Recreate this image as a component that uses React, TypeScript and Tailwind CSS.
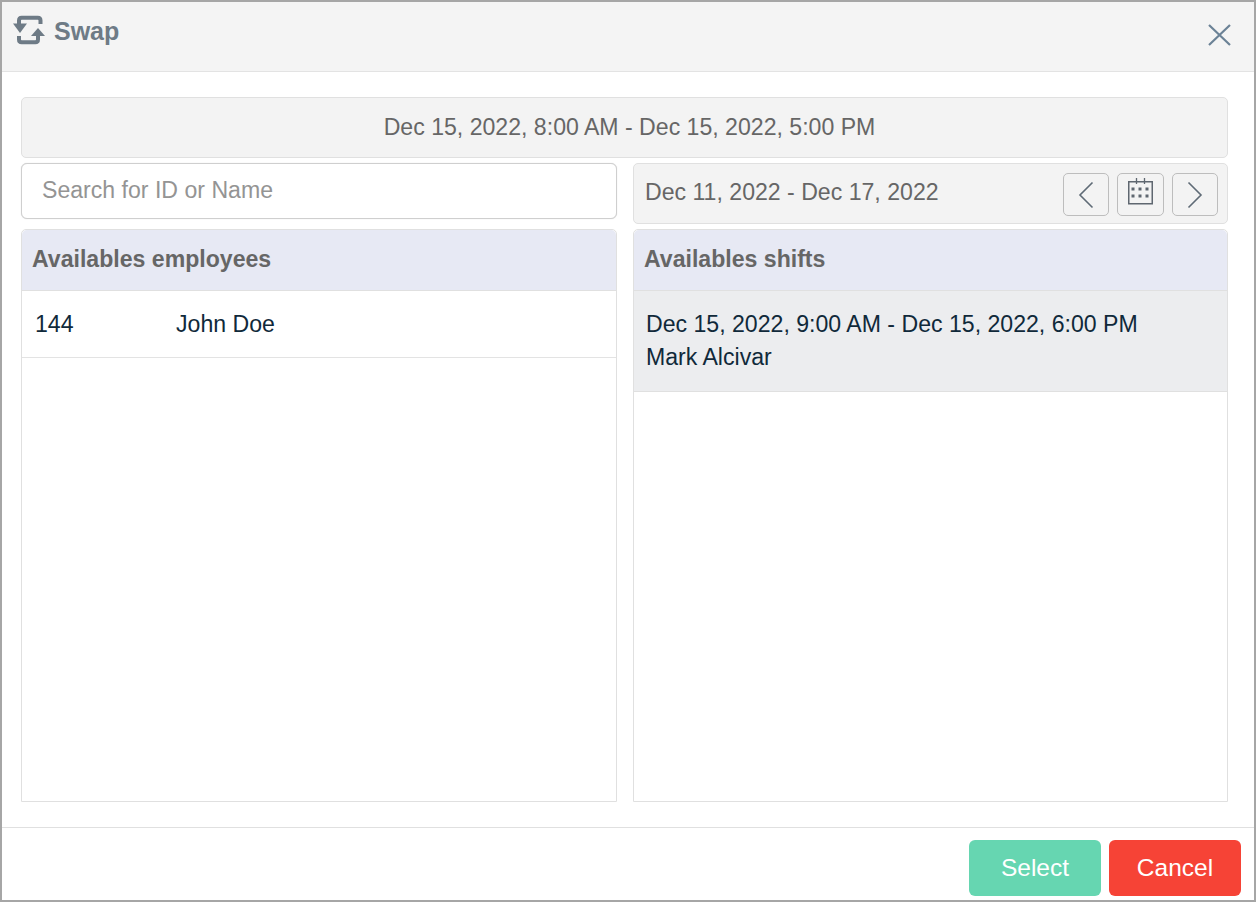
export default function App() {
  return (
    <div className="w-[1256px] h-[902px] flex flex-col border-2 border-[#a6a6a6] bg-white font-['Liberation_Sans',Arial,sans-serif]">
      <header className="h-[70px] shrink-0 flex items-start justify-between bg-[#f4f4f4] border-b border-[#e3e3e3]">
        <div className="flex items-center gap-[9px] pl-[11px] pt-[13px] text-[#6e7b86]">
          <svg width="32" height="32" viewBox="0 0 32 32" fill="none">
            <path d="M6 9V5.5Q6 2.8 8.7 2.8H24.8Q27.5 2.8 27.5 5.5V9" stroke="currentColor" strokeWidth="4" />
            <path d="M0 8.5H14L7 18Z" fill="currentColor" />
            <path d="M6 21V24.5Q6 27.2 8.7 27.2H22.3Q25 27.2 25 24.5V20" stroke="currentColor" strokeWidth="4" />
            <path d="M18 21H32L25 13Z" fill="currentColor" />
          </svg>
          <span className="text-[25px] leading-[32px] font-bold">Swap</span>
        </div>
        <button className="mt-[21px] mr-[23px] text-[#6b8296]">
          <svg width="24" height="24" viewBox="0 0 24 24" fill="none" stroke="currentColor" strokeWidth="2.2">
            <path d="M2 2L23 22M23 2L2 22" />
          </svg>
        </button>
      </header>

      <main className="flex-1 flex flex-col pl-[19px] pr-[26px] pt-[25px] pb-[25px] min-h-0">
        <div className="h-[61px] shrink-0 flex items-center justify-center pl-[10px] bg-[#f3f3f3] border border-[#e0e0e0] rounded-[5px] text-[23.1px] text-[#666666]">
          Dec 15, 2022, 8:00 AM - Dec 15, 2022, 5:00 PM
        </div>

        <div className="flex-1 min-h-0 mt-[5px] grid grid-cols-[596px_595px] gap-x-[16px]">
          <section className="flex flex-col min-h-0">
            <input
              readOnly
              placeholder="Search for ID or Name"
              className="h-[56px] mb-[10px] shrink-0 w-full pl-[20px] pb-[2px] bg-white border border-[#cfcfcf] shadow-[0_0_1px_#cfcfcf] rounded-[6px] text-[23.1px] placeholder:text-[#949494] outline-none"
            />
            <div className="flex-1 flex flex-col border border-[#e0e0e0] rounded-t-[5px] min-h-0">
              <div className="h-[61px] shrink-0 flex items-center px-[10px] pb-[2px] bg-[#e7e9f4] border-b border-[#e0e0e0] text-[23.1px] font-bold text-[#666666] rounded-t-[5px]">
                Availables employees
              </div>
              <div className="h-[67px] shrink-0 flex items-center px-[13px] border-b border-[#e3e3e3] text-[23.1px] text-[#10293a]">
                <span className="w-[141px]">144</span>
                <span>John Doe</span>
              </div>
            </div>
          </section>

          <section className="flex flex-col min-h-0">
            <div className="h-[61px] mb-[5px] shrink-0 flex items-center justify-between pl-[11px] pr-[9px] bg-[#f3f3f3] border border-[#e0e0e0] rounded-[5px]">
              <span className="text-[23.1px] text-[#666666] pb-[2px]">Dec 11, 2022 - Dec 17, 2022</span>
              <div className="flex gap-[8px] mt-[2px]">
                <button className="w-[46px] h-[43px] flex items-center justify-center border border-[#bdbdbd] rounded-[5px] text-[#5f6b76]">
                  <svg width="16" height="28" viewBox="0 0 16 28" fill="none" stroke="currentColor" strokeWidth="1.6">
                    <path d="M14.5 1.5L2 14L14.5 26.5" />
                  </svg>
                </button>
                <button className="w-[47px] h-[43px] flex items-center justify-center border border-[#bdbdbd] rounded-[5px] text-[#5f6770]">
                  <svg width="25" height="27" viewBox="0 0 25 27" fill="none" stroke="currentColor" className="mb-[6px]">
                    <rect x="0.75" y="3.75" width="23.5" height="22" strokeWidth="1.5" />
                    <path d="M8.5 0V6M16.5 0V6" strokeWidth="1.3" />
                    <path d="M3.5 11h3M10.5 11h3M17.5 11h3M3.5 18h3M10.5 18h3M17.5 18h3" strokeWidth="3" />
                  </svg>
                </button>
                <button className="w-[46px] h-[43px] flex items-center justify-center border border-[#bdbdbd] rounded-[5px] text-[#5f6b76]">
                  <svg width="16" height="28" viewBox="0 0 16 28" fill="none" stroke="currentColor" strokeWidth="1.6">
                    <path d="M1.5 1.5L14 14L1.5 26.5" />
                  </svg>
                </button>
              </div>
            </div>
            <div className="flex-1 flex flex-col border border-[#e0e0e0] rounded-t-[5px] min-h-0">
              <div className="h-[61px] shrink-0 flex items-center px-[10px] pb-[2px] bg-[#e7e9f4] border-b border-[#e0e0e0] text-[23.1px] font-bold text-[#666666] rounded-t-[5px]">
                Availables shifts
              </div>
              <div className="h-[101px] shrink-0 flex flex-col justify-center px-[12px] bg-[#ecedef] border-b border-[#e0e0e0] text-[23.1px] leading-[33px] text-[#10293a]">
                <span>Dec 15, 2022, 9:00 AM - Dec 15, 2022, 6:00 PM</span>
                <span>Mark Alcivar</span>
              </div>
            </div>
          </section>
        </div>
      </main>

      <footer className="h-[73px] shrink-0 flex items-start justify-end gap-[8px] pt-[12px] pr-[13px] border-t border-[#e0e0e0]">
        <button className="w-[132px] h-[56px] bg-[#66d6b1] rounded-[6px] text-white text-[24.5px]">Select</button>
        <button className="w-[132px] h-[56px] bg-[#f64336] rounded-[6px] text-white text-[24.5px]">Cancel</button>
      </footer>
    </div>
  );
}
